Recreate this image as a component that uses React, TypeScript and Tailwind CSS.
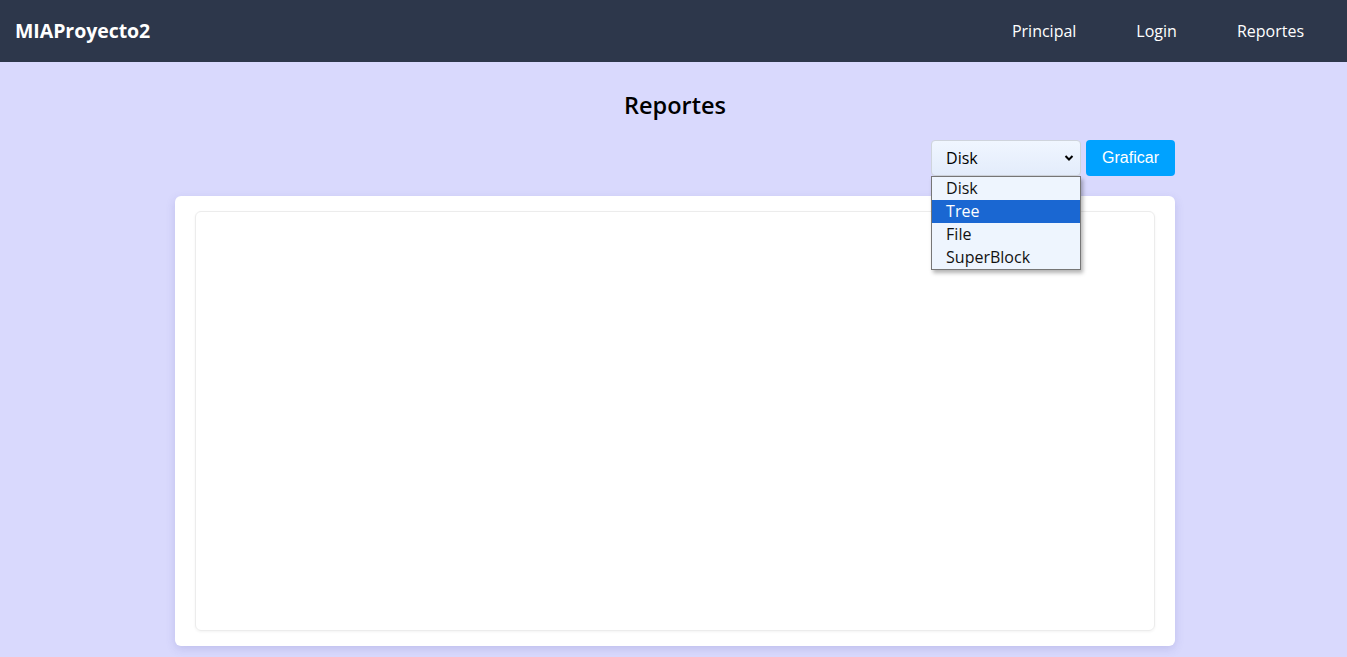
import React from "react";

export default function App() {
  const options = ["Disk", "Tree", "File", "SuperBlock"];
  return (
    <div className="min-h-[657px] bg-[#d9d9fd] font-['Open_Sans',sans-serif]">
      <nav className="h-[62px] bg-[#2d374b] flex items-center justify-between pl-[15px] pr-[13px]">
        <span className="text-white text-[19.5px] font-bold tracking-[-0.05px]">MIAProyecto2</span>
        <div className="flex text-white text-[16px]">
          <a className="px-[30px]">Principal</a>
          <a className="px-[30px]">Login</a>
          <a className="px-[30px]">Reportes</a>
        </div>
      </nav>
      <div className="pl-[3px]">
        <div className="w-[1000px] mx-auto">
          <h1 className="text-center text-[23.5px] font-semibold text-black pt-[27px] leading-[32px]">Reportes</h1>
          <div className="flex justify-end gap-[5px] mt-[19px]">
            <div className="relative">
              <div className="w-[150px] h-[36px] rounded-[4px] border border-[#cfd4dc] bg-gradient-to-b from-[#f0f6ff] to-[#e3ecfb] flex items-center justify-between pl-[14px] pr-[6px] text-[16px] text-black">
                <span>Disk</span>
                <svg width="10" height="8" viewBox="0 0 10 8"><path d="M1.5 2 L5 5.5 L8.5 2" stroke="#000" strokeWidth="2" fill="none" /></svg>
              </div>
              <div className="absolute left-0 top-[36px] w-[150px] border border-[#767676] bg-[#eef5fe] shadow-[2px_3px_4px_rgba(0,0,0,0.3)] z-10 py-0">
                {options.map((o) => (
                  <div
                    key={o}
                    className={
                      o === "Tree"
                        ? "h-[23px] leading-[23px] pl-[14px] text-[16px] bg-[#1a67d2] text-white"
                        : "h-[23px] leading-[23px] pl-[14px] text-[16px] text-[#111]"
                    }
                  >
                    {o}
                  </div>
                ))}
              </div>
            </div>
            <button className="h-[36px] px-[16px] rounded-[4px] bg-[#00a2ff] text-white text-[16px] font-['Liberation_Sans',sans-serif]">
              Graficar
            </button>
          </div>
          <div className="mt-[20px] bg-white rounded-[6px] shadow-[0_3px_10px_rgba(80,80,160,0.18)] px-[20px] py-[15px]">
            <div className="h-[420px] rounded-[6px] border border-[#ececec] shadow-[0_1px_3px_rgba(0,0,0,0.05)]"></div>
          </div>
        </div>
      </div>
    </div>
  );
}
